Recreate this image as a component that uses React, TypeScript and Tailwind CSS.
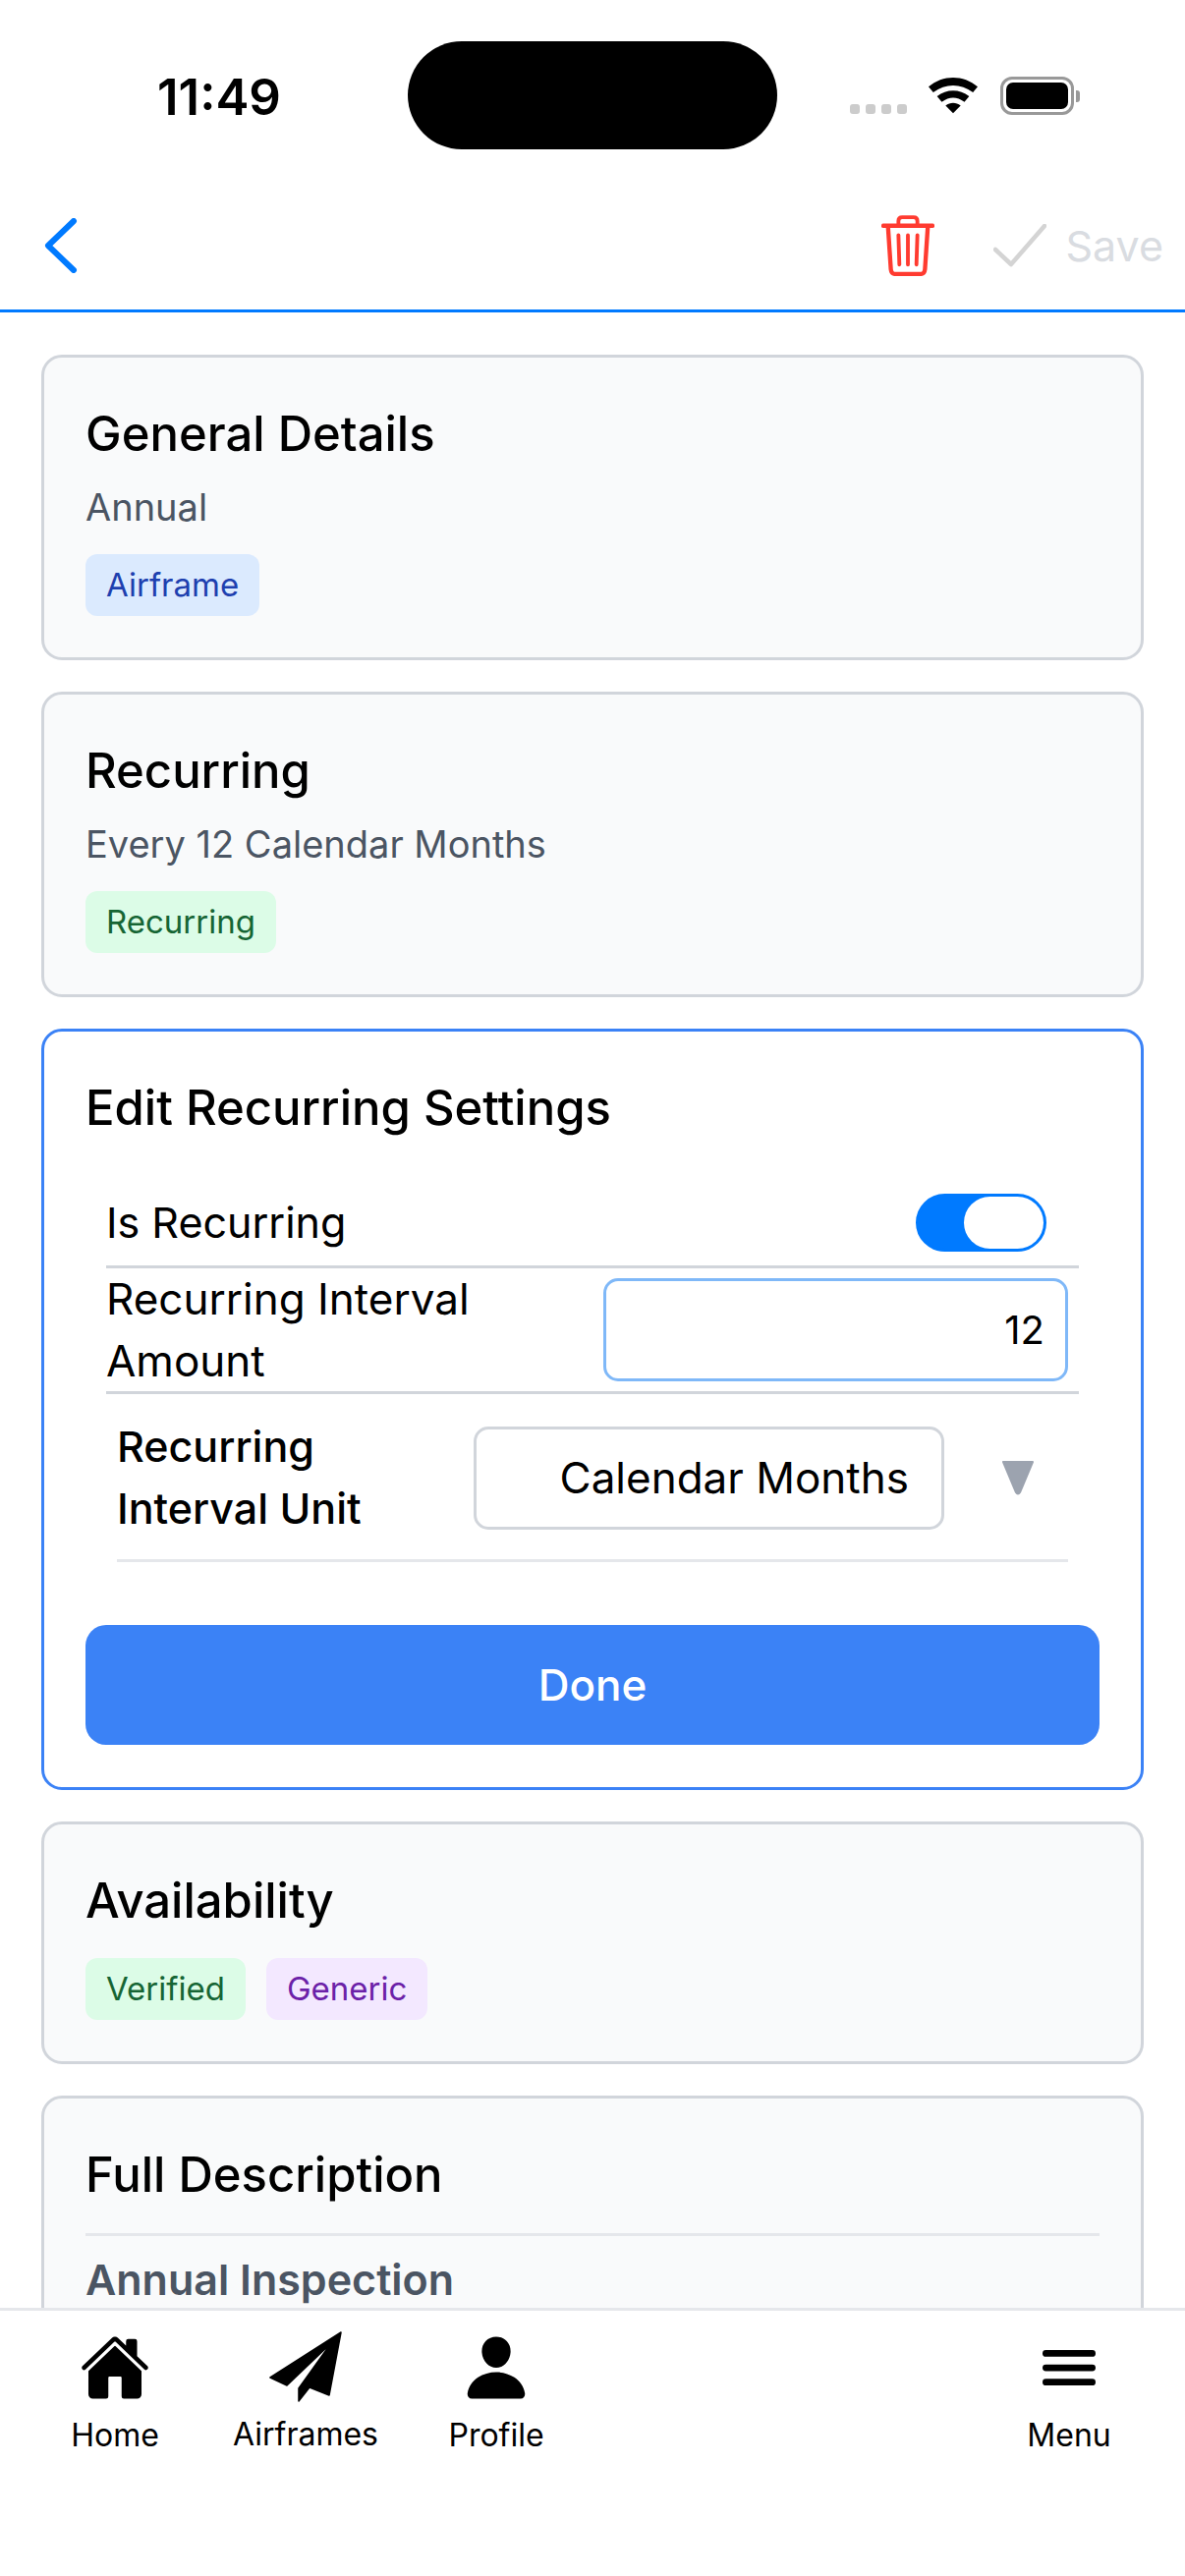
import { IoHome, IoPerson, IoMenu } from 'react-icons/io5'

const sans = 'font-["Inter",sans-serif]'

function Tag({ label, className }: { label: string; className: string }) {
  return (
    <span className={`flex h-[63px] items-center rounded-[12px] px-[21px] text-[33px] ${className}`}>
      {label}
    </span>
  )
}

function Card({ title, children }: { title: string; children: React.ReactNode }) {
  return (
    <section className="shrink-0 rounded-[21px] border-[3px] border-[#d1d5db] bg-[#f9fafb] px-[42px] pt-[48px] pb-[42px]">
      <h2 className="text-[49px] leading-[60px] font-medium text-black">{title}</h2>
      {children}
    </section>
  )
}

function StatusBar() {
  return (
    <div className="relative flex h-[190px] shrink-0 items-start">
      <span className="ml-[160px] mt-[72px] text-[51px] leading-[54px] font-semibold text-black">11:49</span>
      <div className="absolute left-[415px] top-[42px] h-[110px] w-[376px] rounded-[55px] bg-black" />
      <div className="absolute left-[865px] top-[106px] flex gap-[6px]">
        {[0, 1, 2, 3].map((i) => (
          <span key={i} className="h-[10px] w-[10px] rounded-[3px] bg-[#cccccc]" />
        ))}
      </div>
      <svg className="absolute left-[945px] top-[78px]" width="50" height="38" viewBox="0 0 52 38">
        <path d="M0 10 C15 -3 37 -3 52 10 L47 16 C34 6 18 6 5 16 Z" fill="#000" />
        <path d="M9 20 C19 12 33 12 43 20 L38 26 C30 20 22 20 14 26 Z" fill="#000" />
        <path d="M18 30 C23 26 29 26 34 30 L26 38 Z" fill="#000" />
      </svg>
      <div className="absolute left-[1018px] top-[78px] flex items-center">
        <div className="flex h-[39px] w-[75px] items-center justify-center rounded-[12px] border-[3px] border-[#999999] p-[3px]">
          <div className="h-full w-full rounded-[7px] bg-black" />
        </div>
        <div className="ml-[2px] h-[12px] w-[4px] rounded-r-[3px] bg-[#999999]" />
      </div>
    </div>
  )
}

function Header() {
  return (
    <div className="flex h-[128px] shrink-0 items-center border-b-[3px] border-[#007aff] pb-[6px]">
      <svg className="ml-[45px]" width="34" height="56" viewBox="0 0 34 56" fill="none">
        <path d="M30 3 L4 28 L30 53" stroke="#007aff" strokeWidth="6" strokeLinecap="round" strokeLinejoin="round" />
      </svg>
      <svg className="ml-auto" width="54" height="62" viewBox="0 0 56 64" fill="none" stroke="#ff3b30">
        <path d="M2 11 H54" strokeWidth="4.5" strokeLinecap="round" />
        <path d="M18 10 V6 Q18 2 22 2 H34 Q38 2 38 6 V10" strokeWidth="4" />
        <path d="M7 12 L10 57 Q10.500 62 15 62 H41 Q45.500 62 46 57 L49 12" strokeWidth="4.500" />
        <path d="M18 21 L19 52 M28 21 V52 M38 21 L37 52" strokeWidth="4" strokeLinecap="round" />
      </svg>
      <svg className="ml-[60px]" width="54" height="44" viewBox="0 0 54 44" fill="none">
        <path d="M2 26 L18 41 L52 2" stroke="#d4d4d4" strokeWidth="4.500" strokeLinecap="round" strokeLinejoin="round" />
      </svg>
      <span className="ml-[19px] mr-[22px] pt-[2px] text-[43px] text-[#d9dce1]">Save</span>
    </div>
  )
}

function RecurringEditor() {
  return (
    <section className="shrink-0 rounded-[21px] border-[3px] border-[#3b82f6] bg-white px-[42px] pt-[48px] pb-[43px]">
      <h2 className="text-[49px] leading-[60px] font-medium text-black">Edit Recurring Settings</h2>
      <div className="mt-[35px]">
        <div className="mx-[21px] flex h-[98px] items-center justify-between border-b-[3px] border-[#d1d5db] pt-[7px] pr-[33px]">
          <span className="text-[43px] text-black">Is Recurring</span>
          <div className="flex h-[59px] w-[133px] justify-end rounded-full border-[3px] border-[#007aff] bg-[#007aff]">
            <span className="h-full w-[81px] rounded-full bg-white" />
          </div>
        </div>
        <div className="mx-[21px] flex h-[128px] items-center justify-between border-b-[3px] border-[#d1d5db] pr-[11px]">
          <span className="w-[480px] text-[44px] leading-[63px] text-black">Recurring Interval Amount</span>
          <div className="flex h-[105px] w-[473px] items-center justify-end rounded-[15px] border-[3px] border-[#7fb8f8] pr-[21px] text-[40px] text-black">
            12
          </div>
        </div>
        <div className="mx-[32px] flex h-[171px] items-center border-b-[3px] border-[#e5e7eb] pt-[2px]">
          <span className="w-[363px] pr-[70px] text-[43px] leading-[63px] font-medium text-black">Recurring Interval Unit</span>
          <div className="flex h-[105px] w-[479px] items-center justify-end rounded-[15px] border-[3px] border-[#d1d5db] pr-[33px] text-[44px] text-black">
            Calendar Months
          </div>
          <svg className="ml-[58px]" width="34" height="36" viewBox="0 0 34 36">
            <path d="M2 2 H32 L19 33 Q17 36 15 33 Z" fill="#9ca3af" stroke="#9ca3af" strokeWidth="2" strokeLinejoin="round" />
          </svg>
        </div>
      </div>
      <button className="mt-[64px] flex h-[122px] w-full items-center justify-center rounded-[21px] bg-[#3b82f6] text-[44px] font-medium text-white">
        Done
      </button>
    </section>
  )
}

function TabBar() {
  return (
    <nav className="flex h-[273px] shrink-0 border-t-[3px] border-[#e5e7eb] bg-white">
      <div className="ml-[73px] mt-[22px] flex w-[88px] flex-col items-center">
        <IoHome size={72} className="text-black" />
        <span className="mt-[13px] text-[32px] leading-[40px] text-black">Home</span>
      </div>
      <div className="ml-[77px] mt-[19px] flex w-[146px] flex-col items-center">
        <svg width="74" height="72" viewBox="0 0 74 72" className="mt-[2px]">
          <path d="M73 1 L1 47 L18 55 L63 12 L30 58 L30 71 L41 57 L61 65 Z" fill="#000" stroke="#000" strokeWidth="1.500" strokeLinejoin="round" />
        </svg>
        <span className="mt-[13px] text-[32px] leading-[40px] text-black">Airframes</span>
      </div>
      <div className="ml-[73px] mt-[22px] flex w-[96px] flex-col items-center">
        <IoPerson size={72} className="text-black" />
        <span className="mt-[13px] text-[32px] leading-[40px] text-black">Profile</span>
      </div>
      <div className="ml-auto mr-[77px] mt-[22px] flex w-[82px] flex-col items-center">
        <IoMenu size={72} className="text-black" />
        <span className="mt-[13px] text-[32px] leading-[40px] text-black">Menu</span>
      </div>
    </nav>
  )
}

export default function App() {
  return (
    <div className={`flex h-[2622px] w-[1206px] flex-col overflow-hidden bg-white ${sans}`}>
      <StatusBar />
      <Header />
      <main className="flex min-h-0 flex-1 flex-col gap-[32px] overflow-hidden px-[42px] pt-[43px]">
        <Card title="General Details">
          <p className="mt-[17px] text-[38px] leading-[54px] text-[#4b5563]">Annual</p>
          <div className="mt-[21px] flex">
            <Tag label="Airframe" className="bg-[#dbeafe] text-[#1e40af]" />
          </div>
        </Card>
        <Card title="Recurring">
          <p className="mt-[17px] text-[38px] leading-[54px] text-[#4b5563]">Every 12 Calendar Months</p>
          <div className="mt-[21px] flex">
            <Tag label="Recurring" className="bg-[#dcfce7] text-[#166534]" />
          </div>
        </Card>
        <RecurringEditor />
        <Card title="Availability">
          <div className="mt-[28px] flex gap-[21px]">
            <Tag label="Verified" className="bg-[#dcfce7] text-[#166534]" />
            <Tag label="Generic" className="bg-[#f3e8ff] text-[#6b21a8]" />
          </div>
        </Card>
        <Card title="Full Description">
          <div className="mt-[29px] border-t-[3px] border-[#e5e7eb] pt-[14px] pb-[120px]">
            <p className="text-[43px] leading-[60px] font-semibold text-[#4b5563]">Annual Inspection</p>
          </div>
        </Card>
      </main>
      <TabBar />
    </div>
  )
}
